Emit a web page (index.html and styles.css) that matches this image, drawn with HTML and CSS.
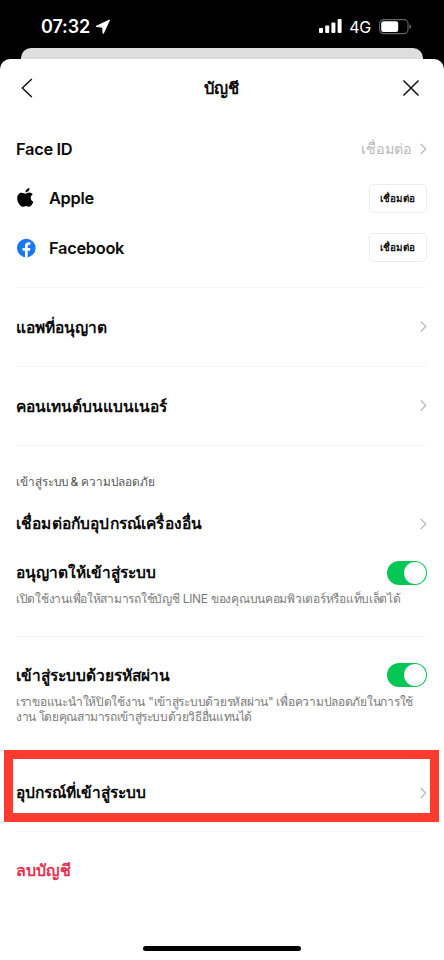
FILE: index.html
```html
<!DOCTYPE html>
<html lang="th">
<head>
<meta charset="utf-8">
<meta name="viewport" content="width=device-width">
<title>บัญชี</title>
<link rel="stylesheet" href="styles.css">
</head>
<body>
<div class="statusbar">
  <span class="time">07:32</span>
  <svg class="location" width="16" height="16" viewBox="0 0 16 16"><path d="M14.300 1.300 1.500 7.400l6.300.7.400 6.100L14.300 1.300Z" fill="#fff" stroke="#fff" stroke-width="1.300" stroke-linejoin="round"/></svg>
  <svg class="signal" width="23" height="15" viewBox="0 0 23 15"><g fill="#fff"><rect x="0" y="9" width="4" height="5" rx="1"/><rect x="6.2" y="6.5" width="4" height="7.5" rx="1"/><rect x="12.4" y="3.5" width="4" height="10.5" rx="1"/><rect x="18.6" y="0" width="4" height="14" rx="1"/></g></svg>
  <span class="network">4G</span>
  <svg class="battery" width="33" height="16" viewBox="0 0 33 16"><rect x=".6" y=".6" width="28.4" height="14" rx="4" fill="none" stroke="#666" stroke-width="1.1"/><rect x="2.2" y="2.2" width="17" height="10.8" rx="2.2" fill="#fff"/><path d="M30.5 5.2c1.9.7 1.9 4 0 4.8Z" fill="#777"/></svg>
</div>
<div class="sheet-behind"></div>
<main class="sheet">
  <header class="header">
    <svg width="14" height="22" viewBox="0 0 14 22"><path d="M11.8 2 2.300 11l9.500 9" fill="none" stroke="#111" stroke-width="1.500"/></svg>
    <h1 class="label">บัญชี</h1>
    <svg width="18" height="18" viewBox="0 0 18 18"><path d="m1.500 1.500 15 15m0-15-15 15" fill="none" stroke="#111" stroke-width="1.500"/></svg>
  </header>
  <section class="group accounts">
    <div class="row"><span class="label latin">Face ID</span><span class="value">เชื่อมต่อ</span><svg class="chevron" viewBox="0 0 8 12"><path d="m1.700 1 5 5-5 5"/></svg></div>
    <div class="row">
      <svg class="brand" viewBox="0 0 20 22"><path d="M13.500 1c.2 2.400-1.800 4.300-4.000 4.400C9.300 3.300 11.300 1.200 13.500 1Z"/><path d="M16.700 7.600c-3.000 1.900-2.500 5.900.6 7.100-.8 2.100-2.200 5-4.000 5-1.300 0-1.700-.8-3.200-.8s-2.000.8-3.200.8C4.300 19.700 1.200 15 1.200 11.200c0-3.500 2.100-5.500 4.600-5.500 1.500 0 2.600 1 3.800 1 1.200 0 2.100-1.100 4.000-1.100 1.200 0 2.400.7 3.100 2Z"/></svg>
      <span class="label latin">Apple</span><button class="connect">เชื่อมต่อ</button>
    </div>
    <div class="row">
      <svg class="brand" viewBox="0 0 20 22"><circle cx="10.300" cy="11" r="9.300" fill="#1877f2"/><path d="M9 20.200v-6.500H6.600V11H9V8.900c0-2.400 1.400-3.700 3.600-3.700.8 0 1.700.1 1.900.2v2.300h-1.200c-1.200 0-1.600.8-1.600 1.500V11h2.700l-.4 2.700h-2.300v6.500Z" fill="#fff"/></svg>
      <span class="label latin">Facebook</span><button class="connect">เชื่อมต่อ</button>
    </div>
  </section>
  <section class="group single"><div class="row"><span class="label">แอพที่อนุญาต</span><svg class="chevron" viewBox="0 0 8 12"><path d="m1.700 1 5 5-5 5"/></svg></div></section>
  <section class="group single"><div class="row"><span class="label">คอนเทนต์บนแบนเนอร์</span><svg class="chevron" viewBox="0 0 8 12"><path d="m1.700 1 5 5-5 5"/></svg></div></section>
  <section class="group login">
    <h2>เข้าสู่ระบบ &amp; ความปลอดภัย</h2>
    <div class="row"><span class="label wide">เชื่อมต่อกับอุปกรณ์เครื่องอื่น</span><svg class="chevron" viewBox="0 0 8 12"><path d="m1.700 1 5 5-5 5"/></svg></div>
    <div class="row"><span class="label">อนุญาตให้เข้าสู่ระบบ</span><span class="toggle"></span></div>
    <p class="hint">เปิดใช้งานเพื่อให้สามารถใช้บัญชี LINE ของคุณบนคอมพิวเตอร์หรือแท็บเล็ตได้</p>
  </section>
  <section class="group password">
    <div class="row"><span class="label">เข้าสู่ระบบด้วยรหัสผ่าน</span><span class="toggle"></span></div>
    <p class="hint">เราขอแนะนำให้ปิดใช้งาน "เข้าสู่ระบบด้วยรหัสผ่าน" เพื่อความปลอดภัยในการใช้<br><span class="tight">งาน โดยคุณสามารถเข้าสู่ระบบด้วยวิธีอื่นแทนได้</span></p>
  </section>
  <section class="highlight"><div class="row"><span class="label">อุปกรณ์ที่เข้าสู่ระบบ</span><svg class="chevron" viewBox="0 0 8 12"><path d="m1.700 1 5 5-5 5"/></svg></div></section>
  <section class="group delete"><div class="row"><span class="label danger">ลบบัญชี</span></div></section>
  <div class="home"></div>
</main>
</body>
</html>
```
FILE: styles.css
```css
*{box-sizing:border-box}
body{margin:0;width:444px;height:960px;overflow:hidden;background:#000;color:#111;font-family:Inter,sans-serif;display:flex;flex-direction:column}
svg,.toggle,.connect{flex:none}
h1,h2,p{margin:0}
.statusbar{height:48px;flex:none;display:flex;align-items:center;padding:5px 32px 0 41px;color:#fff}
.time{font-size:18px;font-weight:600;line-height:22px;width:50px;letter-spacing:-.1px}
.location{margin-left:4px}
.signal{margin-left:auto}
.network{font-size:16px;font-weight:400;margin:0 8px 0 7px;letter-spacing:-.3px}
.sheet-behind{height:11px;flex:none;margin:0 21px;border-radius:10px 10px 0 0;background:#dedede}
.sheet{flex:1;background:#fff;border-radius:10px 10px 0 0;display:flex;flex-direction:column}
.header{height:58px;flex:none;display:flex;align-items:center;justify-content:space-between;padding:0 24px 0 20px}
.header h1{font-size:16.5px;transform:translateX(3px)}
.group{margin:0 17px 0 16px;border-bottom:1px solid #f5f5f5;flex:none}
.row{display:flex;align-items:center;height:49.5px}
.label{font-size:15.5px;font-weight:600;white-space:nowrap;margin-right:auto;color:#0b0b0b}
.wide{letter-spacing:.16px}
.header .label{margin-right:0}
.latin{font-size:16.4px;letter-spacing:-.3px}
.value{font-size:14.3px;color:#b7b7b7;margin-right:7px}
.chevron{width:8px;height:12px;fill:none;stroke:#bbb;stroke-width:1.3}
.brand{width:20px;height:22px;margin-right:13px}
.connect{width:58px;height:29px;padding:0 2px 0 0;border:1px solid #ececec;border-radius:5px;background:#fff;color:#111;font:600 9.9px Inter,sans-serif}
.accounts{height:171px;padding-top:7px}
.single{height:79px;display:flex;flex-direction:column;justify-content:center}
.single .row{transform:translateY(-.5px)}
.login{height:191px;padding-top:26px}
.login h2{font-size:11.8px;font-weight:500;line-height:20px;height:27px;color:#555;white-space:nowrap;letter-spacing:-.06px}
.login .row{height:49px}
.hint{font-size:12px;line-height:15px;color:#7b7b7b;white-space:nowrap;letter-spacing:-.27px}
.tight{letter-spacing:-.38px}
.login .hint{margin-top:-6px}
.toggle{width:40px;height:24px;border-radius:12px;background:#06c755;padding:1px;display:flex;justify-content:flex-end}
.toggle::after{content:"";width:22px;height:22px;border-radius:50%;background:#fff}
.password{height:114px;padding-top:13.5px;border:0}
.password .hint{margin-top:-6px}
.highlight{height:72px;flex:none;margin:-1px 5px 0 4px;border:9px solid #ff3b30;padding:9px 3px 0 3px}
.delete{margin-top:9px;border:0;border-top:1px solid #f5f5f5;padding-top:14px}
.danger{color:#e8314f;font-size:15.9px}
.home{width:158px;height:5px;border-radius:3px;background:#000;margin:auto auto 9px 143px}
```
